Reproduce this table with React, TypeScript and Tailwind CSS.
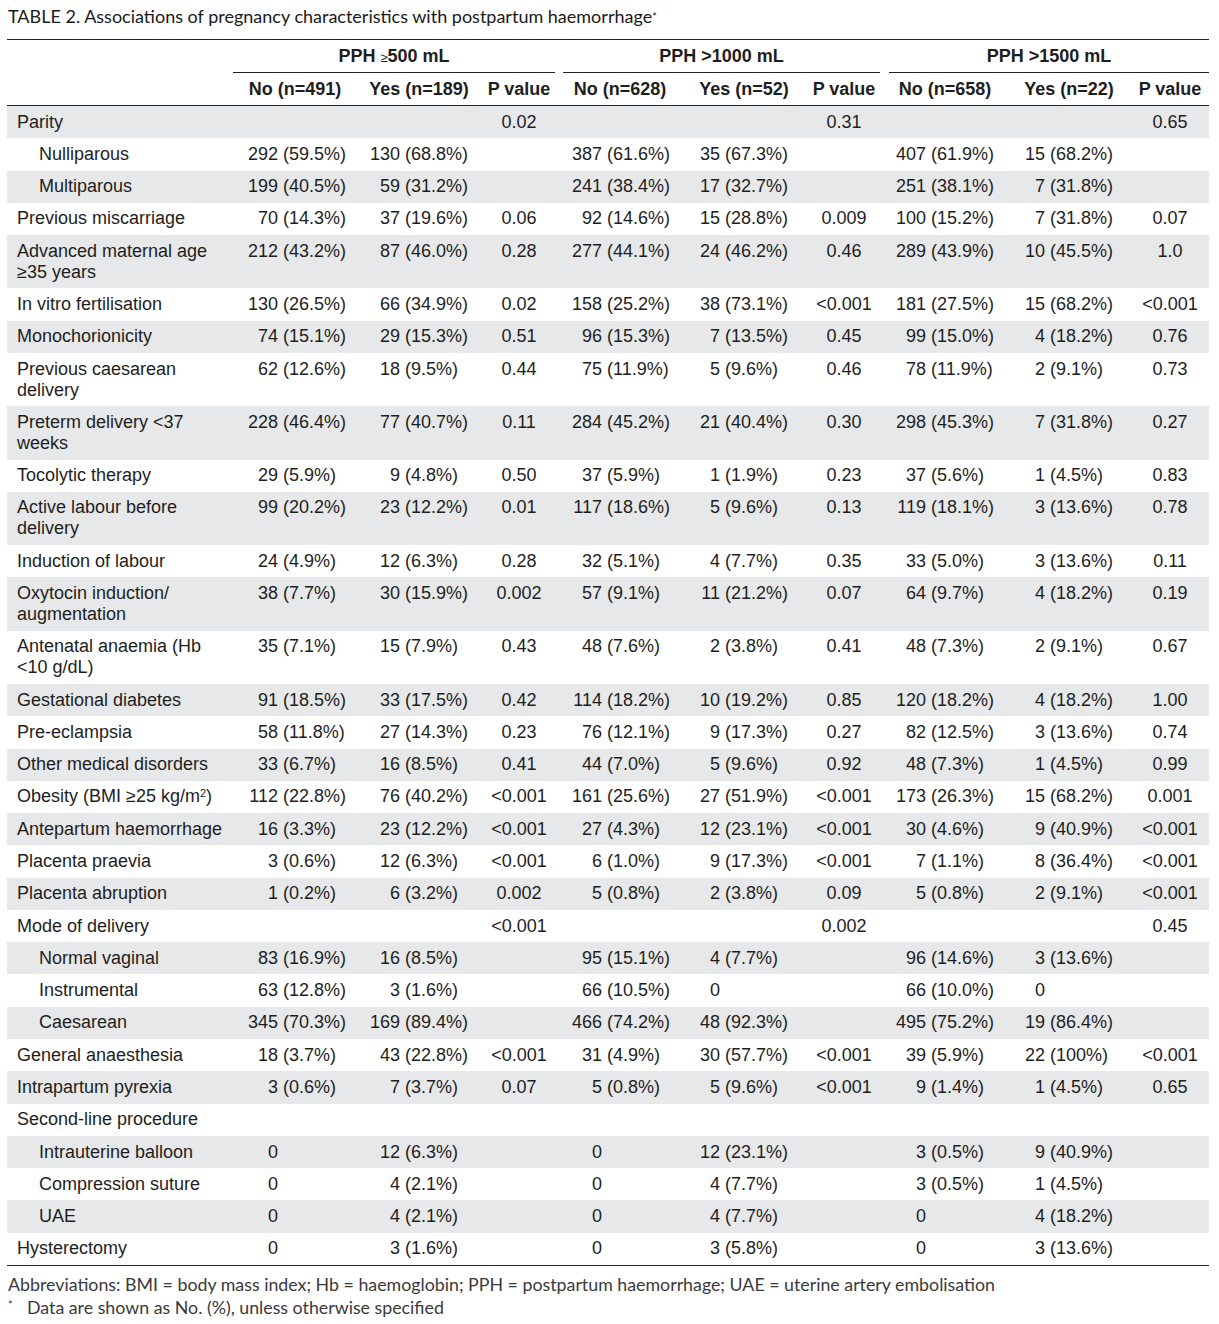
import React from 'react';

type Row = {
  label: React.ReactNode;
  sub?: boolean;
  cells: string[];
};

const rows: Row[] = [
  { label: 'Parity', cells: ['', '', '0.02', '', '', '0.31', '', '', '0.65'] },
  { label: 'Nulliparous', sub: true, cells: ['292 (59.5%)', '130 (68.8%)', '', '387 (61.6%)', '35 (67.3%)', '', '407 (61.9%)', '15 (68.2%)', ''] },
  { label: 'Multiparous', sub: true, cells: ['199 (40.5%)', '59 (31.2%)', '', '241 (38.4%)', '17 (32.7%)', '', '251 (38.1%)', '7 (31.8%)', ''] },
  { label: 'Previous miscarriage', cells: ['70 (14.3%)', '37 (19.6%)', '0.06', '92 (14.6%)', '15 (28.8%)', '0.009', '100 (15.2%)', '7 (31.8%)', '0.07'] },
  { label: <>Advanced maternal age<br />≥35 years</>, cells: ['212 (43.2%)', '87 (46.0%)', '0.28', '277 (44.1%)', '24 (46.2%)', '0.46', '289 (43.9%)', '10 (45.5%)', '1.0'] },
  { label: 'In vitro fertilisation', cells: ['130 (26.5%)', '66 (34.9%)', '0.02', '158 (25.2%)', '38 (73.1%)', '<0.001', '181 (27.5%)', '15 (68.2%)', '<0.001'] },
  { label: 'Monochorionicity', cells: ['74 (15.1%)', '29 (15.3%)', '0.51', '96 (15.3%)', '7 (13.5%)', '0.45', '99 (15.0%)', '4 (18.2%)', '0.76'] },
  { label: <>Previous caesarean<br />delivery</>, cells: ['62 (12.6%)', '18 (9.5%)', '0.44', '75 (11.9%)', '5 (9.6%)', '0.46', '78 (11.9%)', '2 (9.1%)', '0.73'] },
  { label: <>Preterm delivery &lt;37<br />weeks</>, cells: ['228 (46.4%)', '77 (40.7%)', '0.11', '284 (45.2%)', '21 (40.4%)', '0.30', '298 (45.3%)', '7 (31.8%)', '0.27'] },
  { label: 'Tocolytic therapy', cells: ['29 (5.9%)', '9 (4.8%)', '0.50', '37 (5.9%)', '1 (1.9%)', '0.23', '37 (5.6%)', '1 (4.5%)', '0.83'] },
  { label: <>Active labour before<br />delivery</>, cells: ['99 (20.2%)', '23 (12.2%)', '0.01', '117 (18.6%)', '5 (9.6%)', '0.13', '119 (18.1%)', '3 (13.6%)', '0.78'] },
  { label: 'Induction of labour', cells: ['24 (4.9%)', '12 (6.3%)', '0.28', '32 (5.1%)', '4 (7.7%)', '0.35', '33 (5.0%)', '3 (13.6%)', '0.11'] },
  { label: <>Oxytocin induction/<br />augmentation</>, cells: ['38 (7.7%)', '30 (15.9%)', '0.002', '57 (9.1%)', '11 (21.2%)', '0.07', '64 (9.7%)', '4 (18.2%)', '0.19'] },
  { label: <>Antenatal anaemia (Hb<br />&lt;10 g/dL)</>, cells: ['35 (7.1%)', '15 (7.9%)', '0.43', '48 (7.6%)', '2 (3.8%)', '0.41', '48 (7.3%)', '2 (9.1%)', '0.67'] },
  { label: 'Gestational diabetes', cells: ['91 (18.5%)', '33 (17.5%)', '0.42', '114 (18.2%)', '10 (19.2%)', '0.85', '120 (18.2%)', '4 (18.2%)', '1.00'] },
  { label: 'Pre-eclampsia', cells: ['58 (11.8%)', '27 (14.3%)', '0.23', '76 (12.1%)', '9 (17.3%)', '0.27', '82 (12.5%)', '3 (13.6%)', '0.74'] },
  { label: 'Other medical disorders', cells: ['33 (6.7%)', '16 (8.5%)', '0.41', '44 (7.0%)', '5 (9.6%)', '0.92', '48 (7.3%)', '1 (4.5%)', '0.99'] },
  { label: <>Obesity (BMI ≥25 kg/m<sup className="text-[11px]">2</sup>)</>, cells: ['112 (22.8%)', '76 (40.2%)', '<0.001', '161 (25.6%)', '27 (51.9%)', '<0.001', '173 (26.3%)', '15 (68.2%)', '0.001'] },
  { label: 'Antepartum haemorrhage', cells: ['16 (3.3%)', '23 (12.2%)', '<0.001', '27 (4.3%)', '12 (23.1%)', '<0.001', '30 (4.6%)', '9 (40.9%)', '<0.001'] },
  { label: 'Placenta praevia', cells: ['3 (0.6%)', '12 (6.3%)', '<0.001', '6 (1.0%)', '9 (17.3%)', '<0.001', '7 (1.1%)', '8 (36.4%)', '<0.001'] },
  { label: 'Placenta abruption', cells: ['1 (0.2%)', '6 (3.2%)', '0.002', '5 (0.8%)', '2 (3.8%)', '0.09', '5 (0.8%)', '2 (9.1%)', '<0.001'] },
  { label: 'Mode of delivery', cells: ['', '', '<0.001', '', '', '0.002', '', '', '0.45'] },
  { label: 'Normal vaginal', sub: true, cells: ['83 (16.9%)', '16 (8.5%)', '', '95 (15.1%)', '4 (7.7%)', '', '96 (14.6%)', '3 (13.6%)', ''] },
  { label: 'Instrumental', sub: true, cells: ['63 (12.8%)', '3 (1.6%)', '', '66 (10.5%)', '0', '', '66 (10.0%)', '0', ''] },
  { label: 'Caesarean', sub: true, cells: ['345 (70.3%)', '169 (89.4%)', '', '466 (74.2%)', '48 (92.3%)', '', '495 (75.2%)', '19 (86.4%)', ''] },
  { label: 'General anaesthesia', cells: ['18 (3.7%)', '43 (22.8%)', '<0.001', '31 (4.9%)', '30 (57.7%)', '<0.001', '39 (5.9%)', '22 (100%)', '<0.001'] },
  { label: 'Intrapartum pyrexia', cells: ['3 (0.6%)', '7 (3.7%)', '0.07', '5 (0.8%)', '5 (9.6%)', '<0.001', '9 (1.4%)', '1 (4.5%)', '0.65'] },
  { label: 'Second-line procedure', cells: ['', '', '', '', '', '', '', '', ''] },
  { label: 'Intrauterine balloon', sub: true, cells: ['0', '12 (6.3%)', '', '0', '12 (23.1%)', '', '3 (0.5%)', '9 (40.9%)', ''] },
  { label: 'Compression suture', sub: true, cells: ['0', '4 (2.1%)', '', '0', '4 (7.7%)', '', '3 (0.5%)', '1 (4.5%)', ''] },
  { label: 'UAE', sub: true, cells: ['0', '4 (2.1%)', '', '0', '4 (7.7%)', '', '0', '4 (18.2%)', ''] },
  { label: 'Hysterectomy', cells: ['0', '3 (1.6%)', '', '0', '3 (5.8%)', '', '0', '3 (13.6%)', ''] },
];

// width of the right-aligned count box for each count column
const countBox = ['w-[45px]', 'w-[43px]', '', 'w-[45px]', 'w-[37px]', '', 'w-[43px]', 'w-[38px]', ''];

const gridCols = 'grid grid-cols-[226px_124px_124px_76px_126px_122px_78px_124px_124px_78px]';

function CountCell({ value, box }: { value: string; box: string }) {
  const i = value.indexOf(' ');
  const count = i === -1 ? value : value.slice(0, i);
  const rest = i === -1 ? '' : value.slice(i);
  return (
    <div className="whitespace-pre">
      <span className={`inline-block text-right ${box}`}>{count}</span>
      {rest}
    </div>
  );
}

export default function App() {
  return (
    <div className="w-[1219px] bg-white text-[#1e1e1e] pb-4">
      <h1 className="pl-2 pt-[5px] text-[18px] leading-[22px] font-['Lato',sans-serif] text-[#1a1a1a]">
        TABLE 2. Associations of pregnancy characteristics with postpartum haemorrhage
        <sup className="text-[11px] relative -top-[2px]">*</sup>
      </h1>

      <div className="ml-[7px] w-[1202px] mt-[12px] font-['Liberation_Sans',Arial,sans-serif] text-[18px]">
        {/* group header */}
        <div className={`${gridCols} border-t border-[#222] font-bold`}>
          <div />
          <div className="col-span-3 mr-[2px] border-b border-[#222] h-[33px] flex items-center justify-center">
            <span>
              PPH <span className="text-[13px] font-normal">≥</span>500 mL
            </span>
          </div>
          <div className="col-span-3 ml-[6px] mr-[3px] border-b border-[#222] h-[33px] flex items-center justify-center">
            <span>PPH &gt;1000 mL</span>
          </div>
          <div className="col-span-3 ml-[6px] border-b border-[#222] h-[33px] flex items-center justify-center">
            <span>PPH &gt;1500 mL</span>
          </div>
        </div>

        {/* column header */}
        <div className={`${gridCols} border-b border-[#222] font-bold h-[33px] items-center text-center`}>
          <div />
          <div>No (n=491)</div>
          <div>Yes (n=189)</div>
          <div>P value</div>
          <div>No (n=628)</div>
          <div>Yes (n=52)</div>
          <div>P value</div>
          <div>No (n=658)</div>
          <div>Yes (n=22)</div>
          <div>P value</div>
        </div>

        {/* body */}
        <div className="border-b border-[#222]">
          {rows.map((r, idx) => (
            <div
              key={idx}
              className={`${gridCols} leading-[21px] py-[5.65px] items-start ${idx % 2 === 0 ? 'bg-[#e7e8e9]' : 'bg-white'}`}
            >
              <div className={r.sub ? 'pl-[32px]' : 'pl-[10px]'}>{r.label}</div>
              {r.cells.map((c, j) =>
                (j + 1) % 3 === 0 ? (
                  <div key={j} className="text-center">{c}</div>
                ) : c ? (
                  <CountCell key={j} value={c} box={countBox[j]} />
                ) : (
                  <div key={j} />
                )
              )}
            </div>
          ))}
        </div>
      </div>

      <div className="pl-2 pt-[7px] font-['Lato',sans-serif] text-[17.8px] leading-[23px] text-[#3a3a3a]">
        <p>Abbreviations: BMI = body mass index; Hb = haemoglobin; PPH = postpartum haemorrhage; UAE = uterine artery embolisation</p>
        <p className="flex">
          <span className="w-[19px] text-[11px] relative -top-[3px]">*</span>
          <span>Data are shown as No. (%), unless otherwise specified</span>
        </p>
      </div>
    </div>
  );
}
